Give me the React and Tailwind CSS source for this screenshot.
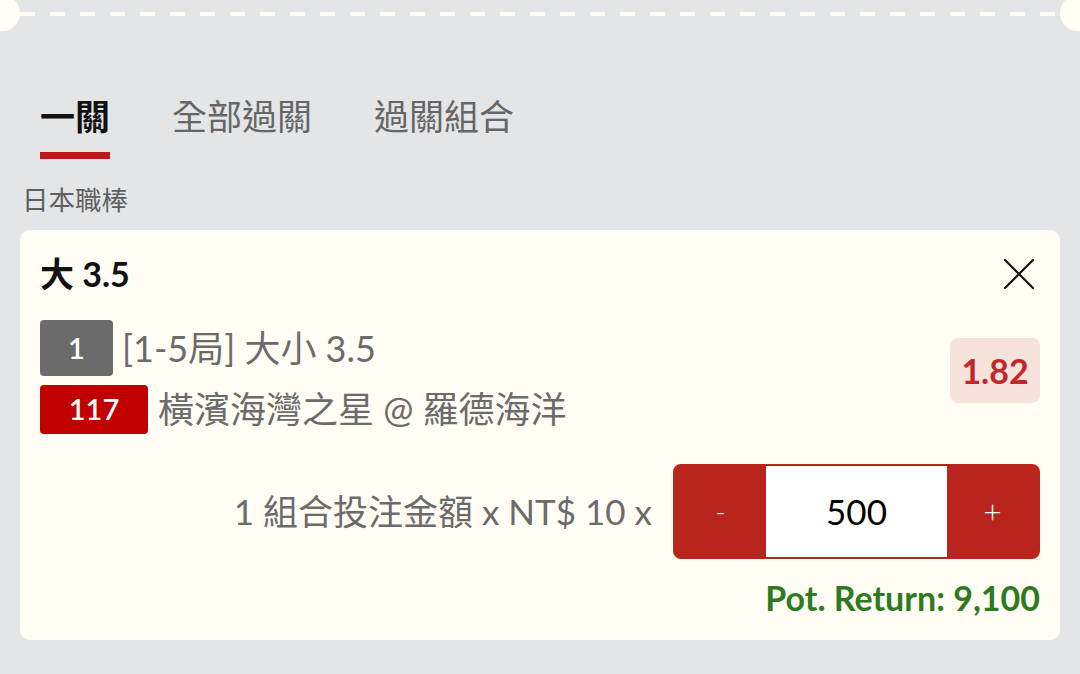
import React from 'react';

function CloseIcon() {
  return (
    <svg width="30" height="30" viewBox="0 0 30 30" className="mr-[6px]">
      <path d="M1 1 L29 29 M29 1 L1 29" stroke="#111" strokeWidth="2.2" strokeLinecap="round" />
    </svg>
  );
}

export default function App() {
  return (
    <div className="min-h-[674px] w-[1080px] overflow-hidden bg-[#e4e5e7] font-['Lato','Noto_Sans_CJK_TC',sans-serif]">
      {/* ticket edge */}
      <div className="relative h-[32px]">
        <svg className="absolute left-0 top-[12px]" width="1080" height="4">
          <line x1="20" y1="2" x2="1060" y2="2" stroke="#fffdf4" strokeWidth="4" strokeDasharray="15 15" />
        </svg>
        <div className="absolute -left-[16px] -top-[5px] h-[36px] w-[36px] rounded-full bg-[#fffdf4]" />
        <div className="absolute -right-[16px] -top-[5px] h-[36px] w-[36px] rounded-full bg-[#fffdf4]" />
      </div>

      {/* tabs */}
      <div className="mt-[67px] flex gap-[62px] pl-10">
        <div className="flex flex-col">
          <span className="text-[35px] font-bold leading-none text-[#111]">一關</span>
          <span className="mt-[18px] h-[7px] bg-[#c0171b]" />
        </div>
        <div className="flex flex-col">
          <span className="text-[35px] leading-none text-[#666]">全部過關</span>
          <span className="mt-[18px] h-[7px]" />
        </div>
        <div className="flex flex-col">
          <span className="text-[35px] leading-none text-[#666]">過關組合</span>
          <span className="mt-[18px] h-[7px]" />
        </div>
      </div>

      <div className="mt-[28px] pl-[22px] text-[26.5px] leading-none text-[#5f5f5f]">日本職棒</div>

      {/* bet card */}
      <div className="mx-5 mt-[16px] rounded-[10px] bg-[#fffdf4] px-5 pb-[25px] pt-[28px]">
        <div className="flex h-[32px] items-center justify-between">
          <span className="text-[34px] font-bold leading-none text-[#111]">大 3.5</span>
          <CloseIcon />
        </div>

        <div className="mt-[30px] flex items-center justify-between">
          <div className="flex flex-col gap-[9px]">
            <div className="flex items-center gap-[9px]">
              <span className="flex h-[56px] w-[73px] items-center justify-center rounded-[4px] bg-[#6b6b6b] text-[29px] font-semibold text-white">
                1
              </span>
              <span className="text-[36px] leading-none text-[#6b6b6b]">[1-5局] 大小 3.5</span>
            </div>
            <div className="flex items-center gap-[10px]">
              <span className="flex h-[49px] w-[108px] items-center justify-center rounded-[4px] bg-[#c00000] text-[29px] font-semibold text-white">
                117
              </span>
              <span className="text-[36px] leading-none text-[#6b6b6b]">橫濱海灣之星 @ 羅德海洋</span>
            </div>
          </div>
          <div className="mb-[12px] flex h-[65px] w-[90px] items-center justify-center rounded-[8px] bg-[#f7e3dc] text-[34px] font-bold text-[#c0282a]">
            1.82
          </div>
        </div>

        <div className="mt-[30px] flex items-center justify-end gap-[21px]">
          <span className="text-[35px] leading-none text-[#6b6b6b]">1 組合投注金額 x NT$ 10 x</span>
          <div className="flex h-[95px] w-[367px] rounded-[8px] bg-[#b9251d] p-[2px]">
            <button className="flex w-[91px] items-center justify-center text-[28px] font-light text-white">-</button>
            <div className="flex w-[181px] items-center justify-center bg-white text-[35px] text-black">500</div>
            <button className="flex flex-1 items-center justify-center text-[32px] font-light text-white">+</button>
          </div>
        </div>

        <div className="mt-[22px] text-right text-[34px] font-bold leading-none text-[#2e7b1f]">Pot. Return: 9,100</div>
      </div>
    </div>
  );
}
